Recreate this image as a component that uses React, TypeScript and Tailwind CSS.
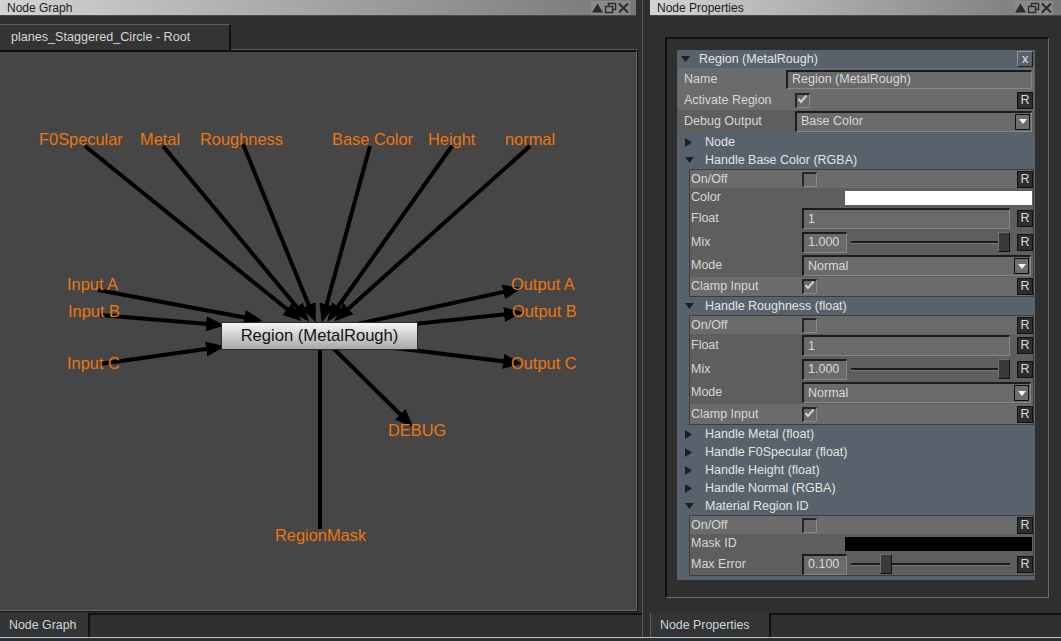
import React from 'react';

// graph edges, page coords (graph svg uses a viewBox offset so these map 1:1)
const EDGES = [
  { x1: 85, y1: 146, x2: 298, y2: 318, arrow: true },
  { x1: 163, y1: 146, x2: 306, y2: 318, arrow: true },
  { x1: 243, y1: 144, x2: 314, y2: 318, arrow: true },
  { x1: 370, y1: 146, x2: 323, y2: 318, arrow: true },
  { x1: 452, y1: 146, x2: 330, y2: 318, arrow: true },
  { x1: 530, y1: 146, x2: 338, y2: 318, arrow: true },
  { x1: 98, y1: 290, x2: 258, y2: 320, arrow: true },
  { x1: 100, y1: 315, x2: 220, y2: 325, arrow: true },
  { x1: 100, y1: 364, x2: 220, y2: 347, arrow: true },
  { x1: 330, y1: 330, x2: 517, y2: 289, arrow: true },
  { x1: 330, y1: 333, x2: 518, y2: 313, arrow: true },
  { x1: 330, y1: 340, x2: 517, y2: 363, arrow: true },
  { x1: 330, y1: 345, x2: 410, y2: 424, arrow: true },
  { x1: 320, y1: 340, x2: 320, y2: 529, arrow: false },
];

const LABELS = [
  { t: 'F0Specular', x: 39, y: 145 },
  { t: 'Metal', x: 140, y: 145 },
  { t: 'Roughness', x: 200, y: 145 },
  { t: 'Base Color', x: 332, y: 145 },
  { t: 'Height', x: 428, y: 145 },
  { t: 'normal', x: 505, y: 145 },
  { t: 'Input A', x: 67, y: 290 },
  { t: 'Input B', x: 68, y: 317 },
  { t: 'Input C', x: 67, y: 369 },
  { t: 'Output A', x: 511, y: 290 },
  { t: 'Output B', x: 512, y: 317 },
  { t: 'Output C', x: 511, y: 369 },
  { t: 'DEBUG', x: 388, y: 436 },
  { t: 'RegionMask', x: 275, y: 541 },
];

function WinButtons({ className }: { className: string }) {
  return (
    <div className={`flex items-center h-[14px] bg-[#8a8a8a] ${className}`}>
      <svg width="13" height="12" viewBox="0 0 13 12">
        <path d="M1 10.5 L6.5 1.5 L12 10.5 Z" fill="#2b2b2b" />
      </svg>
      <svg width="13" height="12" viewBox="0 0 13 12">
        <rect x="4.5" y="1.5" width="7" height="6" fill="none" stroke="#2b2b2b" strokeWidth="1.4" />
        <rect x="1.5" y="4.5" width="7" height="6" fill="#8a8a8a" stroke="#2b2b2b" strokeWidth="1.4" />
      </svg>
      <svg width="13" height="12" viewBox="0 0 13 12">
        <path d="M2 1.5 L11 10.5 M11 1.5 L2 10.5" stroke="#2b2b2b" strokeWidth="2" />
      </svg>
    </div>
  );
}

function TitleBar({ title, btn }: { title: string; btn: string }) {
  return (
    <div className="h-[16px] flex items-center justify-between bg-linear-to-r from-[#d4d4d4] to-[#777777] border-b border-[#4a4a4a]">
      <span className="pl-[7px] text-[12px] leading-none text-[#1c1c1c]">{title}</span>
      <WinButtons className={btn} />
    </div>
  );
}

function Graph() {
  return (
    <div className="relative w-[637px] h-[561px] bg-[#464646] border-t-2 border-t-[#111] border-r border-b border-r-[#6a6a6a] border-b-[#6a6a6a] shadow-[1px_1px_0_#111] overflow-hidden">
      <svg className="absolute left-0 top-0" width="636" height="558" viewBox="0 52 636 558">
        <defs>
          <marker id="ah" markerUnits="userSpaceOnUse" markerWidth="20" markerHeight="16" refX="14" refY="7.5" orient="auto">
            <path d="M0 0 L19 7.5 L0 15 Z" fill="#000" />
          </marker>
        </defs>
        {EDGES.map((e, i) => (
          <line key={i} x1={e.x1} y1={e.y1} x2={e.x2} y2={e.y2} stroke="#000" strokeWidth="4" markerEnd={e.arrow ? 'url(#ah)' : undefined} />
        ))}
        {LABELS.map(l => (
          <text key={l.t} x={l.x} y={l.y} fontSize="16.4" fill="#ec7612">{l.t}</text>
        ))}
      </svg>
      <div className="absolute left-[221px] top-[270px] w-[197px] h-[28px] bg-linear-to-b from-[#f6f6f6] to-[#a9a9a9] border border-[#2a2a2a] flex items-center justify-center text-[16.6px] text-[#151515]">
        Region (MetalRough)
      </div>
    </div>
  );
}

function LeftPanel() {
  return (
    <div className="w-[642px] flex flex-col">
      <div className="w-[636px]"><TitleBar title="Node Graph" btn="mr-[6px]" /></div>
      <div className="h-[8px]" />
      <div className="h-[26px] flex w-[637px]">
        <div className="w-[231px] h-full bg-[#343434] border-t border-[#5c5c5c] border-r-2 border-r-[#111] flex items-center pl-[11px] text-[12.6px] text-[#d6d6d6]">
          planes_Staggered_Circle - Root
        </div>
        <div className="flex-1 border-b border-[#5c5c5c]" />
      </div>
      <Graph />
      <div className="h-[2px]" />
      <div className="h-[24px] flex">
        <div className="w-[90px] bg-[#343434] border-r-2 border-[#111] pl-[9px] flex items-center text-[12.4px] text-[#cfd6dc]">Node Graph</div>
        <div className="flex-1 border-t-2 border-[#111]" />
      </div>
    </div>
  );
}

function RBtn() {
  return (
    <div className="w-[16px] h-[17px] bg-[#2e2e2e] border border-[#111] flex items-center justify-center text-[12.5px] leading-none text-[#d8d8d8]">R</div>
  );
}

function Check({ checked }: { checked?: boolean }) {
  return (
    <div className="w-[15px] h-[15px] bg-[#6a6a6a] border-t-2 border-l-2 border-t-[#262626] border-l-[#262626] border-r border-b border-r-[#8a8a8a] border-b-[#8a8a8a] flex items-start justify-start">
      {checked && (
        <svg width="11" height="9" viewBox="0 0 11 9">
          <path d="M1.5 4 L4 7 L9.5 0.5" stroke="#d4d4d4" strokeWidth="2" fill="none" />
        </svg>
      )}
    </div>
  );
}

function Field({ className, value }: { className: string; value: string }) {
  return (
    <div className={`flex items-center bg-[#6a6a6a] border-t-2 border-l-2 border-t-[#1c1c1c] border-l-[#1c1c1c] border-r border-b border-r-[#868686] border-b-[#868686] pl-[4px] text-[12.5px] leading-none text-[#d8d8d8] ${className}`}>
      {value}
    </div>
  );
}

function Select({ className, value }: { className: string; value: string }) {
  return (
    <div className={`flex items-center h-[21px] bg-[#6a6a6a] border-t-2 border-l-2 border-t-[#1c1c1c] border-l-[#1c1c1c] border-r border-b border-r-[#868686] border-b-[#868686] ${className}`}>
      <span className="flex-1 pl-[4px] text-[12.5px] leading-none text-[#d8d8d8]">{value}</span>
      <div className="w-[15px] h-[16px] mr-[1px] border border-[#111] bg-[#6e6e6e] flex items-center justify-center">
        <svg width="8" height="5" viewBox="0 0 8 5"><path d="M0 0 H8 L4 5 Z" fill="#f2f2f2" /></svg>
      </div>
    </div>
  );
}

function Slider({ value, pos }: { value: string; pos: string }) {
  return (
    <>
      <Field className="w-[45px] h-[21px]" value={value} />
      <div className="relative ml-[4px] w-[159px] h-[22px] flex items-center">
        <div className="w-full h-[3px] bg-[#1c1c1c] border-b border-[#7a7a7a]" />
        <div className={`absolute top-[1px] w-[12px] h-[20px] bg-[#3a3a3a] border border-[#111] border-l-[#707070] border-t-[#707070] ${pos}`} />
      </div>
    </>
  );
}

function TopRow({ label, className, children }: { label: string; className: string; children?: React.ReactNode }) {
  return (
    <div className={`flex items-center ${className}`}>
      <div className="w-[108px] pl-[6px] text-[12.5px] leading-none text-[#d6d6d6]">{label}</div>
      <div className="flex-1 flex items-center pr-[1px]">{children}</div>
    </div>
  );
}

function SubRow({ label, className, children }: { label: string; className: string; children?: React.ReactNode }) {
  return (
    <div className={`flex items-center ${className}`}>
      <div className="w-[112px] pl-[1px] text-[12.5px] leading-none text-[#d6d6d6]">{label}</div>
      <div className="flex-1 flex items-center">{children}</div>
    </div>
  );
}

function Fold({ label, open }: { label: string; open?: boolean }) {
  return (
    <div className="h-[18px] flex items-center text-[12.5px] leading-none text-[#e2e2e2]">
      <div className="w-[27px] pl-[7px] flex items-center">
        {open ? (
          <svg width="9" height="6" viewBox="0 0 9 6"><path d="M0 0 H9 L4.5 6 Z" fill="#1e1e1e" /></svg>
        ) : (
          <svg width="7" height="9" viewBox="0 0 7 9"><path d="M0 0 L7 4.5 L0 9 Z" fill="#1e1e1e" /></svg>
        )}
      </div>
      {label}
    </div>
  );
}

const LIGHT = 'bg-[#6b6b6b]';
const DARK = 'bg-[#5e5e5e]';

function HandleRows({ color }: { color?: boolean }) {
  return (
    <div className="ml-[11px] border border-[#3c3c3c] flex flex-col">
      <SubRow label="On/Off" className={`h-[18px] ${LIGHT}`}>
        <Check />
        <div className="ml-auto"><RBtn /></div>
      </SubRow>
      {color && (
        <SubRow label="Color" className={`h-[19px] ${DARK}`}>
          <div className="ml-[43px] w-[187px] h-[14px] bg-white" />
        </SubRow>
      )}
      <SubRow label="Float" className={`h-[23px] ${DARK}`}>
        <Field className="w-[208px] h-[21px]" value="1" />
        <div className="ml-auto"><RBtn /></div>
      </SubRow>
      <SubRow label="Mix" className={`h-[24px] ${DARK}`}>
        <Slider value="1.000" pos="left-[147px]" />
        <div className="ml-auto"><RBtn /></div>
      </SubRow>
      <SubRow label="Mode" className={`h-[23px] ${DARK}`}>
        <Select className="w-[229px]" value="Normal" />
      </SubRow>
      <SubRow label="Clamp Input" className={`${color ? 'h-[19px]' : 'h-[20px]'} ${LIGHT}`}>
        <Check checked />
        <div className="ml-auto"><RBtn /></div>
      </SubRow>
    </div>
  );
}

function PropsGroup() {
  return (
    <div className="w-[358px] h-[530px] bg-[#58626d] flex flex-col px-[1px]">
      <div className="h-[18px] flex items-center text-[12.5px] leading-none text-[#e4e4e4]">
        <div className="w-[21px] pl-[3px] flex items-center">
          <svg width="9" height="6" viewBox="0 0 9 6"><path d="M0 0 H9 L4.5 6 Z" fill="#1e1e1e" /></svg>
        </div>
        Region (MetalRough)
        <div className="ml-auto mr-[1px] w-[16px] h-[16px] border border-[#1c1c1c] border-l-[#8a949e] border-t-[#8a949e] flex items-center justify-center text-[12.5px] leading-none text-[#e4e4e4]">x</div>
      </div>
      <TopRow label="Name" className={`h-[22px] ${LIGHT}`}>
        <Field className="w-[246px] h-[19px]" value="Region (MetalRough)" />
      </TopRow>
      <TopRow label="Activate Region" className={`h-[20px] ${LIGHT}`}>
        <div className="ml-[9px]"><Check checked /></div>
        <div className="ml-auto"><RBtn /></div>
      </TopRow>
      <TopRow label="Debug Output" className={`h-[22px] ${DARK}`}>
        <Select className="ml-[9px] w-[237px]" value="Base Color" />
      </TopRow>
      <div className="h-[1px]" />
      <Fold label="Node" />
      <Fold label="Handle Base Color (RGBA)" open />
      <HandleRows color />
      <Fold label="Handle Roughness (float)" open />
      <HandleRows />
      <Fold label="Handle Metal (float)" />
      <Fold label="Handle F0Specular (float)" />
      <Fold label="Handle Height (float)" />
      <Fold label="Handle Normal (RGBA)" />
      <Fold label="Material Region ID" open />
      <div className="ml-[11px] border border-[#3c3c3c] flex flex-col">
        <SubRow label="On/Off" className={`h-[18px] ${LIGHT}`}>
          <Check />
          <div className="ml-auto"><RBtn /></div>
        </SubRow>
        <SubRow label="Mask ID" className={`h-[19px] ${DARK}`}>
          <div className="ml-[43px] w-[187px] h-[14px] bg-black" />
        </SubRow>
        <SubRow label="Max Error" className={`h-[22px] ${DARK}`}>
          <Slider value="0.100" pos="left-[29px]" />
          <div className="ml-auto"><RBtn /></div>
        </SubRow>
      </div>
    </div>
  );
}

function RightPanel() {
  return (
    <div className="w-[411px] flex flex-col">
      <TitleBar title="Node Properties" btn="mr-[8px]" />
      <div className="h-[21px]" />
      <div className="ml-[15px] w-[384px] h-[561px] border-t-2 border-l-2 border-t-[#111] border-l-[#111] border-r border-b border-r-[#6a6a6a] border-b-[#6a6a6a] pl-[10px] pt-[11px]">
        <PropsGroup />
      </div>
      <div className="h-[15px]" />
      <div className="h-[24px] flex">
        <div className="w-[121px] bg-[#343434] border-l border-[#5c5c5c] border-r-2 border-r-[#111] pl-[9px] flex items-center text-[12.4px] text-[#cfd6dc]">Node Properties</div>
        <div className="flex-1 border-t-2 border-[#111]" />
      </div>
    </div>
  );
}

export default function App() {
  return (
    <div className="w-[1061px] h-[641px] overflow-hidden bg-[#2f2f2f] font-['Liberation_Sans',Arial,sans-serif] flex flex-col">
      <div className="flex h-[637px]">
        <LeftPanel />
        <div className="w-[1px] bg-[#5a5a5a]" />
        <div className="w-[7px]" />
        <RightPanel />
      </div>
      <div className="h-[1px] bg-[#c4c4c4]" />
      <div className="h-[3px] bg-[#25323a]" />
    </div>
  );
}
